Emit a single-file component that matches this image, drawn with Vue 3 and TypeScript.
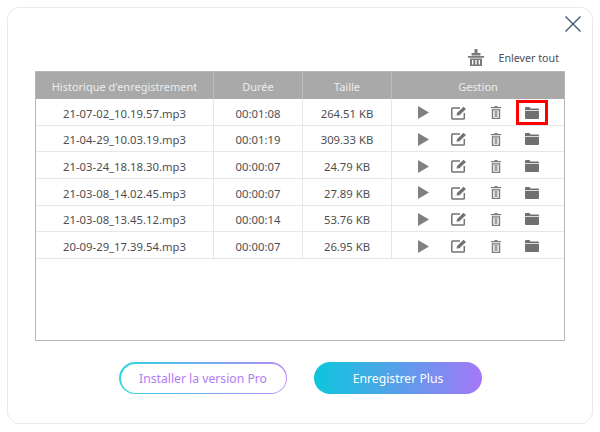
<script setup lang="ts">
interface Row { name: string; duration: string; size: string }
const rows: Row[] = [
  { name: '21-07-02_10.19.57.mp3', duration: '00:01:08', size: '264.51 KB' },
  { name: '21-04-29_10.03.19.mp3', duration: '00:01:19', size: '309.33 KB' },
  { name: '21-03-24_18.18.30.mp3', duration: '00:00:07', size: '24.79 KB' },
  { name: '21-03-08_14.02.45.mp3', duration: '00:00:07', size: '27.89 KB' },
  { name: '21-03-08_13.45.12.mp3', duration: '00:00:14', size: '53.76 KB' },
  { name: '20-09-29_17.39.54.mp3', duration: '00:00:07', size: '26.95 KB' },
]
</script>

<template>
  <div class="page">
    <div class="card">
      <div class="close-row">
        <svg class="close" width="16" height="16" viewBox="0 0 16 16"><path d="M0.500 0.500 15.500 15.500M15.500 0.500 0.500 15.500" stroke="#3d5371" stroke-width="1.3" fill="none" /></svg>
      </div>
      <div class="tools">
        <svg width="16" height="17" viewBox="0 0 16 17"><path d="M6.500 0h3v4h-3z" fill="#7a7a7a" /><path d="M3.500 4h9v2.500h-9z" fill="#7a7a7a" /><path d="M0 7h16v1.800H0z" fill="#7a7a7a" /><path d="M2 9.500h12V17H2zM4 11v4.500h1.300V11zM7.300 11v4.500h1.400V11zM10.700 11v4.500H12V11z" fill="#7a7a7a" fill-rule="evenodd" /></svg>
        <span class="clear">Enlever tout</span>
      </div>
      <div class="table">
        <div class="head">
          <div class="th">Historique d'enregistrement</div>
          <div class="th">Durée</div>
          <div class="th">Taille</div>
          <div class="th">Gestion</div>
        </div>
        <div v-for="(r, i) in rows" :key="r.name" class="row">
          <div class="td">{{ r.name }}</div>
          <div class="td">{{ r.duration }}</div>
          <div class="td">{{ r.size }}</div>
          <div class="actions">
            <span class="slot">
              <svg width="11" height="13" viewBox="0 0 11 13"><path d="M0 0 11 6.500 0 13z" fill="#808080" /></svg>
            </span>
            <span class="slot">
              <svg width="16" height="14" viewBox="0 0 16 14"><path d="M9 2H1.500A.8.8 0 0 0 .8 2.800v9.400a.8.8 0 0 0 .7.800h11a.8.8 0 0 0 .8-.8V7" stroke="#737373" stroke-width="1.500" fill="none" /><path d="M5.500 9.500 6 7 12.500 .8 15 3 8.500 9.200z" fill="#737373" /></svg>
            </span>
            <span class="slot">
              <svg width="10" height="13" viewBox="0 0 10 13"><path d="M3.500 0h3v1H10v1.300H0V1h3.500z" fill="#7a7a7a" /><path d="M.8 3.200h8.400V13H.8zM2.200 4.500v7.200h5.600V4.500z" fill="#7a7a7a" fill-rule="evenodd" /><path d="M3.500 5h3v6h-3z" fill="#a0a0a0" /></svg>
            </span>
            <span class="slot folder" :class="{ marked: i === 0 }">
              <svg width="14" height="12" viewBox="0 0 14 12"><path d="M0 1a1 1 0 0 1 1-1h3.500l1 1.500H13a1 1 0 0 1 1 1V3H0z" fill="#707070" /><path d="M0 3.800h14V11a1 1 0 0 1-1 1H1a1 1 0 0 1-1-1z" fill="#707070" /></svg>
            </span>
          </div>
        </div>
      </div>
      <div class="footer">
        <div class="btn-outline"><span class="btn-outline-inner">Installer la version Pro</span></div>
        <div class="btn-fill">Enregistrer Plus</div>
      </div>
    </div>
  </div>
</template>

<style>
html, body { margin: 0; background: #fff; }
</style>

<style scoped>
.page {
  width: 600px;
  height: 432px;
  padding: 7px 0 0 7px;
  box-sizing: border-box;
  background: #fff;
  font-family: "Noto Sans", sans-serif;
  overflow: hidden;
}
.card {
  width: 586px;
  height: 417px;
  box-sizing: border-box;
  border: 1px solid #e9e9e9;
  border-radius: 12px;
  padding: 8px 27px 0;
  display: flex;
  flex-direction: column;
}
.close-row {
  display: flex;
  justify-content: flex-end;
  height: 16px;
  margin-right: -16px;
}
.tools {
  display: flex;
  align-items: center;
  justify-content: flex-end;
  gap: 14px;
  height: 19px;
  margin-top: 16px;
  margin-bottom: 4px;
  padding-right: 6px;
}
.clear {
  font-size: 10.7px;
  color: #4e4e58;
  white-space: nowrap;
}
.table {
  width: 530px;
  height: 270px;
  box-sizing: border-box;
  border: 1px solid #b8b8b8;
  flex: none;
}
.head, .row {
  display: grid;
  grid-template-columns: 177px 89px 89px 1fr;
}
.head {
  height: 27px;
  background: #a9a9a9;
}
.th {
  display: flex;
  align-items: center;
  justify-content: center;
  padding-top: 1px;
  box-sizing: border-box;
  font-size: 11px;
  color: #ececec;
  border-left: 1px solid #bdbdbd;
  white-space: nowrap;
}
.th:first-child, .td:first-child { border-left: none; }
.row {
  height: 26.67px;
  box-sizing: border-box;
  border-bottom: 1px solid #e6e6e6;
}
.td {
  display: flex;
  align-items: center;
  justify-content: center;
  padding-top: 3px;
  box-sizing: border-box;
  font-size: 11.3px;
  color: #4e4e52;
  border-left: 1px solid #e6e6e6;
  white-space: nowrap;
}
.actions {
  display: grid;
  grid-template-columns: 36px 36px 37px 37px;
  padding-left: 13px;
  border-left: 1px solid #e6e6e6;
}
.slot {
  position: relative;
  display: flex;
  align-items: center;
  justify-content: center;
  padding-top: 2px;
}
.folder {
  padding-right: 2px;
}
.marked::after {
  content: "";
  position: absolute;
  left: 2px;
  top: 1px;
  width: 32px;
  height: 25px;
  box-sizing: border-box;
  border: 3px solid #ff0000;
}
.footer {
  display: flex;
  gap: 27px;
  margin-top: 21px;
  margin-left: 84px;
}
.btn-outline, .btn-fill {
  width: 168px;
  height: 32px;
  border-radius: 16px;
  box-sizing: border-box;
  font-size: 12.2px;
}
.btn-outline {
  padding: 1.5px;
  background: linear-gradient(90deg, #2fd6e2, #b58cf8);
}
.btn-outline-inner {
  display: flex;
  align-items: center;
  justify-content: center;
  height: 100%;
  border-radius: 15px;
  background: #fff;
  color: #b07cf4;
}
.btn-fill {
  display: flex;
  align-items: center;
  justify-content: center;
  color: #fff;
  background: linear-gradient(90deg, #0cc6dc, #a578f8);
}
</style>
